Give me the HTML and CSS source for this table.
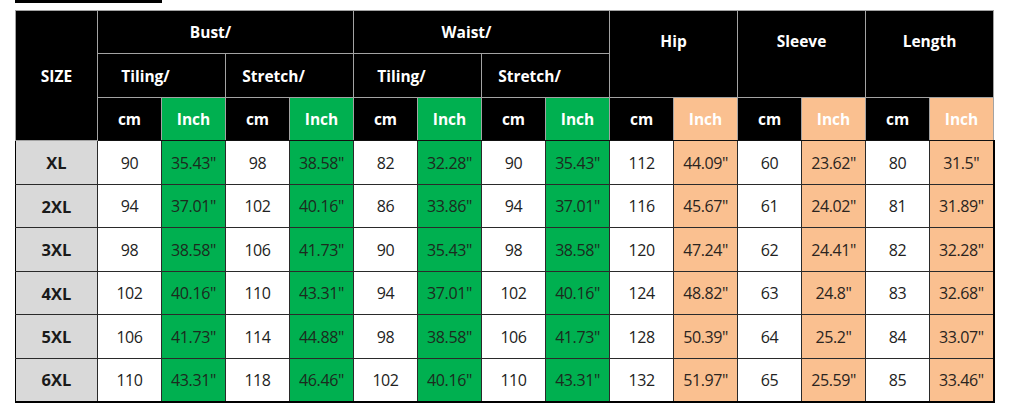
FILE: index.html
```html
<!DOCTYPE html>
<html>
<head>
<meta charset="utf-8">
<link rel="stylesheet" href="styles.css">
</head>
<body>
<div class="page">
  <div class="topbar"></div>
  <table class="chart">
    <colgroup>
      <col class="c-size">
      <col><col><col><col><col><col><col><col><col><col><col><col><col><col>
    </colgroup>
    <thead>
      <tr class="r1">
        <th rowspan="3" class="h">SIZE</th>
        <th colspan="4" class="h shift">Bust/</th>
        <th colspan="4" class="h shift">Waist/</th>
        <th colspan="2" rowspan="2" class="h top">Hip</th>
        <th colspan="2" rowspan="2" class="h top">Sleeve</th>
        <th colspan="2" rowspan="2" class="h top">Length</th>
      </tr>
      <tr class="r2">
        <th colspan="2" class="h shift2">Tiling/</th>
        <th colspan="2" class="h shift2">Stretch/</th>
        <th colspan="2" class="h shift2">Tiling/</th>
        <th colspan="2" class="h shift2">Stretch/</th>
      </tr>
      <tr class="r3">
        <th class="h">cm</th><th class="h g">Inch</th>
        <th class="h">cm</th><th class="h g">Inch</th>
        <th class="h">cm</th><th class="h g">Inch</th>
        <th class="h">cm</th><th class="h g">Inch</th>
        <th class="h">cm</th><th class="h o">Inch</th>
        <th class="h">cm</th><th class="h o">Inch</th>
        <th class="h">cm</th><th class="h o">Inch</th>
      </tr>
    </thead>
    <tbody>
      <tr class="odd">
        <td class="sz">XL</td>
        <td>90</td><td class="g">35.43"</td><td>98</td><td class="g">38.58"</td>
        <td>82</td><td class="g">32.28"</td><td>90</td><td class="g">35.43"</td>
        <td>112</td><td class="o">44.09"</td><td>60</td><td class="o">23.62"</td><td>80</td><td class="o">31.5"</td>
      </tr>
      <tr class="even">
        <td class="sz">2XL</td>
        <td>94</td><td class="g">37.01"</td><td>102</td><td class="g">40.16"</td>
        <td>86</td><td class="g">33.86"</td><td>94</td><td class="g">37.01"</td>
        <td>116</td><td class="o">45.67"</td><td>61</td><td class="o">24.02"</td><td>81</td><td class="o">31.89"</td>
      </tr>
      <tr class="odd">
        <td class="sz">3XL</td>
        <td>98</td><td class="g">38.58"</td><td>106</td><td class="g">41.73"</td>
        <td>90</td><td class="g">35.43"</td><td>98</td><td class="g">38.58"</td>
        <td>120</td><td class="o">47.24"</td><td>62</td><td class="o">24.41"</td><td>82</td><td class="o">32.28"</td>
      </tr>
      <tr class="even">
        <td class="sz">4XL</td>
        <td>102</td><td class="g">40.16"</td><td>110</td><td class="g">43.31"</td>
        <td>94</td><td class="g">37.01"</td><td>102</td><td class="g">40.16"</td>
        <td>124</td><td class="o">48.82"</td><td>63</td><td class="o">24.8"</td><td>83</td><td class="o">32.68"</td>
      </tr>
      <tr class="odd">
        <td class="sz">5XL</td>
        <td>106</td><td class="g">41.73"</td><td>114</td><td class="g">44.88"</td>
        <td>98</td><td class="g">38.58"</td><td>106</td><td class="g">41.73"</td>
        <td>128</td><td class="o">50.39"</td><td>64</td><td class="o">25.2"</td><td>84</td><td class="o">33.07"</td>
      </tr>
      <tr class="even last">
        <td class="sz">6XL</td>
        <td>110</td><td class="g">43.31"</td><td>118</td><td class="g">46.46"</td>
        <td>102</td><td class="g">40.16"</td><td>110</td><td class="g">43.31"</td>
        <td>132</td><td class="o">51.97"</td><td>65</td><td class="o">25.59"</td><td>85</td><td class="o">33.46"</td>
      </tr>
    </tbody>
  </table>
</div>
</body>
</html>
```
FILE: styles.css
```css
html, body {
  margin: 0;
  padding: 0;
  background: #ffffff;
}

.page {
  padding-left: 15px;
  width: 1009px;
}

.topbar {
  width: 147px;
  height: 3px;
  background: #000;
  margin-bottom: 7px;
}

.chart {
  border-collapse: collapse;
  table-layout: fixed;
  width: 979px;
  font-family: "Open Sans", "Noto Sans", sans-serif;
}

.chart col {
  width: 64px;
}

.chart col.c-size {
  width: 82px;
}

.chart th,
.chart td {
  padding: 0;
  text-align: center;
  vertical-align: middle;
  overflow: hidden;
  white-space: nowrap;
}

.h {
  background: #000;
  color: #fff;
  font-weight: 700;
  font-size: 15.5px;
  border: 1px solid #a3a3a3;
}

.h.g {
  background: #00b050;
}

.h.o {
  background: #fac090;
}

.shift {
  padding-right: 30px !important;
}

.shift2 {
  padding-right: 32px !important;
}

.top {
  vertical-align: top !important;
  padding-top: 19px !important;
}

.r1 {
  height: 43px;
}

.r2 {
  height: 44px;
}

.r3 {
  height: 43px;
}

.r3 .h {
  border-bottom: 1px solid #111;
}

.chart tbody td {
  font-size: 16px;
  color: #222;
  background: #fff;
  border: 1px solid #2a2a2a;
  letter-spacing: -0.4px;
}

.chart tbody tr.odd {
  height: 44px;
}

.chart tbody tr.even {
  height: 43px;
}

.chart tbody td.sz {
  background: #d9d9d9;
  font-weight: 700;
  font-size: 16.5px;
  color: #1a1a1a;
  letter-spacing: 0;
  border-left: 1px solid #000;
}

.chart tbody td.g {
  background: #00b050;
  color: #1c2a1e;
}

.chart tbody td.o {
  background: #fac090;
  color: #2a2420;
}

.chart tbody tr.last td {
  border-bottom: 2px solid #000;
}

.chart tbody td:last-child {
  border-right: 2px solid #000;
}
```
